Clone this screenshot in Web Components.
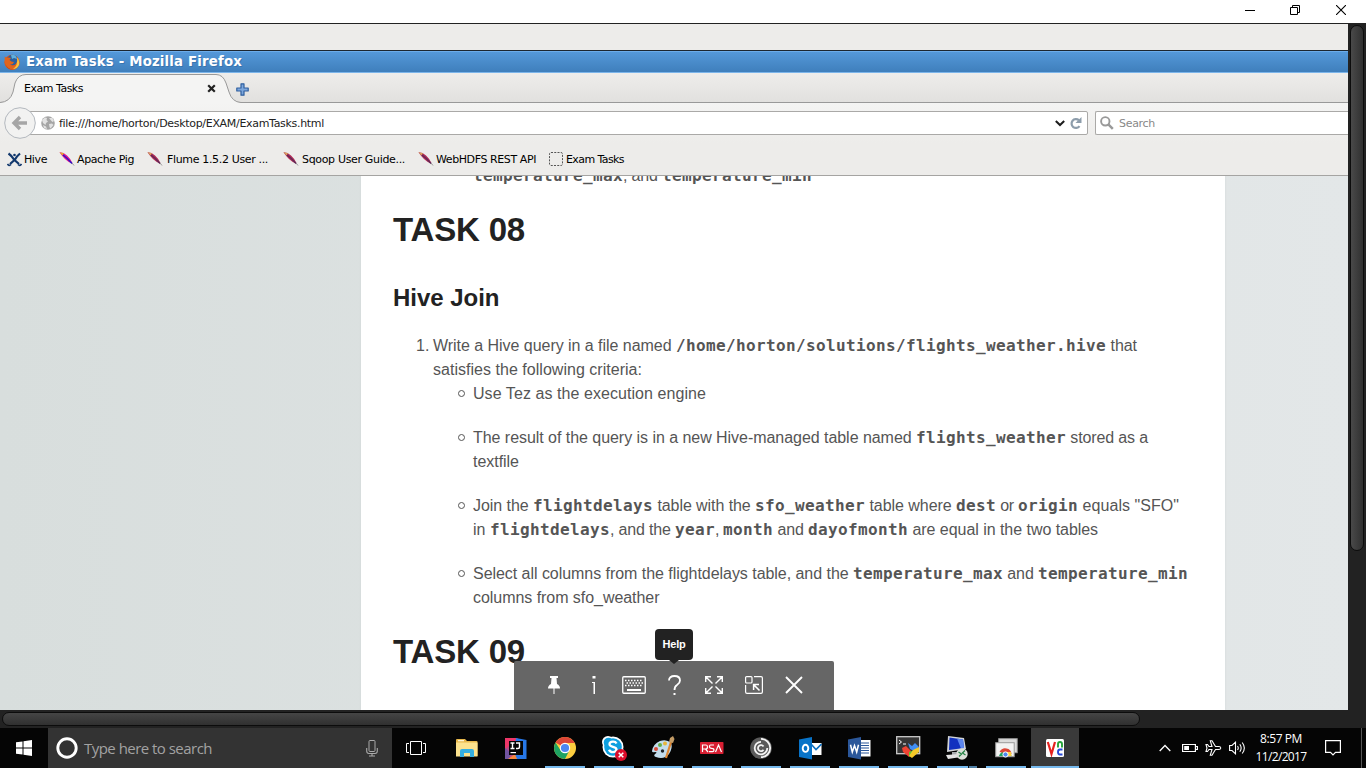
<!DOCTYPE html>
<html lang="en">
<head>
<meta charset="utf-8">
<title>Exam Tasks</title>
<style>html,body{margin:0;width:1366px;height:768px;overflow:hidden;background:#000}</style>
</head>
<body>
<remote-desktop></remote-desktop>
<script>
const define = (name, html) => customElements.define(name, class extends HTMLElement {
  constructor() {
    super();
    this.attachShadow({ mode: 'open' }).innerHTML = html;
  }
});

const feather = (quill, edge, tip) => `<svg width="16" height="16" viewBox="0 0 16 16"><path d="M.5 1.200Q4.500 1 8 4.500Q12 8 14 13Q9.500 11.500 6 8Q3 5 .5 1.200Z" fill="${edge}"/><path d="M.5 1.200L3.500 4.500 5 2.200Z" fill="${tip}"/><path d="M4 4Q9 7.500 13 12.500" fill="none" stroke="${quill}" stroke-width="1.300"/><path d="M13 12L15 14.500" stroke="#999" stroke-width="1"/></svg>`;
const ICONS = {
  min: `<svg width="10" height="10"><path d="M0 5.500H10" stroke="#000"/></svg>`,
  restore: `<svg width="10" height="10" fill="none" stroke="#000"><path d="M.5 2.500H7.500V9.500H.5ZM2.500 2.500V.5H9.500V7.500H7.500"/></svg>`,
  close: `<svg width="10" height="10"><path d="M0 0L10 10M10 0L0 10" stroke="#000" stroke-width="1.100"/></svg>`,
  firefox: `<svg width="16" height="16" viewBox="0 0 16 16"><circle cx="8" cy="8.300" r="7.500" fill="#d9501c"/><circle cx="8.600" cy="6" r="5.300" fill="#2b5f9e"/><path d="M7 1Q12 0 13 5L10 4 8 5Z" fill="#5fb0dc"/><path d="M.8 2.500L3 4Q5 3 7 4L5.500 6Q7 8 10 8Q9 11 6 10.500Q9 13 12 10Q14 7 13 3Q16 6 15.400 10Q13 16 8 15.800Q1 15 .5 8Z" fill="#e0651d"/><path d="M13.200 3.500Q16 7 15 11Q13 15 9 15Q14 12 13.200 3.500Z" fill="#f8c340"/><path d="M1 9Q3 15 9 15.500Q3 16 1 9" fill="#922716"/></svg>`,
  tabx: `<svg width="9" height="9"><path d="M1.200 1.200L7.800 7.800M7.800 1.200L1.200 7.800" stroke="#222" stroke-width="2.200"/></svg>`,
  plus: `<svg width="13" height="13"><path d="M5 .8H8V5H12.200V8H8V12.200H5V8H.8V5H5Z" fill="#7da7dc" stroke="#2f5f9f" stroke-width="1.200" stroke-linejoin="round"/></svg>`,
  back: `<svg width="32" height="32"><circle cx="16" cy="16" r="15.300" fill="#f2f2f1" stroke="#b3b8be"/><path d="M16 10L10 16L16 22M10 16H23" fill="none" stroke="#a6a6a6" stroke-width="3.400"/></svg>`,
  globe: `<svg width="14" height="14" viewBox="0 0 14 14"><circle cx="7" cy="7" r="6.800" fill="#a5a5a5"/><path d="M1 4L4 1.500 6 2 5.500 4 7 5.500 5 7 4.500 9 2 7ZM8 2L11.500 2 13 5 11.500 6 10 4.500ZM8 8L11 7.500 12.500 9 9.500 12.500 8.500 11ZM2 9L5 10.500 6 13 3 12Z" fill="#e2e2e2"/></svg>`,
  chev: `<svg width="10" height="7"><path d="M.8 1L5 5L9.200 1" fill="none" stroke="#1c1c1c" stroke-width="2"/></svg>`,
  reload: `<svg width="12" height="13"><path d="M9.500 9.200A4.400 4.400 0 1 1 8.800 3.200" fill="none" stroke="#8d9dab" stroke-width="2.200"/><path d="M11.500 0V6H5.500Z" fill="#8d9dab"/></svg>`,
  glass: `<svg width="14" height="14"><circle cx="5.300" cy="5.300" r="4.200" fill="none" stroke="#999" stroke-width="1.900"/><path d="M8.300 8.300L12.800 12.800" stroke="#999" stroke-width="2.500"/></svg>`,
  hive: `<svg width="15" height="15" viewBox="0 0 15 15" fill="none" stroke="#12386d"><path d="M1.500 1.500Q5 4 7 7.500L12 12M13 1.500Q10 4 8 7.500L3 12" stroke-width="2.200"/><circle cx="7.500" cy="3" r="1.300" fill="#12386d" stroke="none"/><path d="M.5 12Q2 14.500 4 12.500M11 12.500Q13 14.500 14.500 12" stroke-width="1.700"/></svg>`,
  pig: feather('#2416c8', '#e0128f', '#e8a92c'),
  feather: feather('#5d2a58', '#b02a55', '#d9a25c'),
  dashed: `<svg width="14" height="14"><rect x=".5" y=".5" width="13" height="13" rx="1.500" fill="none" stroke="#555" stroke-dasharray="2 1.250"/></svg>`,
  pin: `<svg width="12" height="18" fill="#fff"><path d="M2 0H10V2H8.500L9 8Q12 9.500 12 12.500H0Q0 9.500 3 8L3.500 2H2Z"/><path d="M5.500 12H6.500V18H5.500Z"/></svg>`,
  info: `<svg width="6" height="18" fill="#fff"><rect x="1.500" width="3" height="2.500"/><path d="M1 6H4V18H2.500V7H1Z"/></svg>`,
  kbd: `<svg width="24" height="18" fill="none" stroke="#fff"><rect x=".75" y=".75" width="22.500" height="16.500" rx="1" stroke-width="1.300"/><path d="M3 4.500H21M4.500 7H21M3 9.500H21" stroke-width="1.400" stroke-dasharray="1.500 1.500"/><path d="M5 14H19" stroke-width="2"/></svg>`,
  help: `<svg width="13" height="20" fill="none" stroke="#fff"><path d="M1 5.500Q1 1 6.500 1Q12 1 12 5.500Q12 8 9 10Q6.500 11.500 6.500 15" stroke-width="1.800"/><path d="M5.500 19H7.500" stroke-width="2"/></svg>`,
  expand: `<svg width="18" height="18" fill="none" stroke="#fff" stroke-width="1.400"><path d="M.7 6V.7H6M.7 .7L7.500 7.500M12 .7H17.300V6M17.300 .7L10.500 7.500M.7 12V17.300H6M.7 17.300L7.500 10.500M12 17.300H17.300V12M17.300 17.300L10.500 10.500"/></svg>`,
  scale: `<svg width="18" height="18" fill="none" stroke="#fff" stroke-width="1.200"><rect x=".6" y=".6" width="6.400" height="6.400" rx="1"/><path d="M9 .6H16Q17.400 .6 17.400 2V16Q17.400 17.400 16 17.400H2Q.6 17.400 .6 16V9"/><path d="M8.600 14V8.600H14M8.600 8.600L14.500 14.500" stroke-width="1.500"/></svg>`,
  bigx: `<svg width="18" height="18"><path d="M1 1L17 17M17 1L1 17" stroke="#fff" stroke-width="1.900"/></svg>`,
  win: `<svg width="16" height="16" fill="#fff"><path d="M0 2.300L6.500 1.400V7.500H0ZM7.500 1.200L16 0V7.500H7.500ZM0 8.500H6.500V14.600L0 13.700ZM7.500 8.500H16V16L7.500 14.800Z"/></svg>`,
  cortana: `<svg width="22" height="22"><circle cx="11" cy="11" r="9.200" fill="none" stroke="#fff" stroke-width="2.900"/></svg>`,
  mic: `<svg width="12" height="17" fill="none" stroke="#aaa"><rect x="3" y=".5" width="6" height="11" rx="1"/><path d="M.7 8V11Q.7 13.500 3 13.500H9Q11.300 13.500 11.300 11V8M6 13.500V16M3 16H9" stroke-width="1.100"/></svg>`,
  view: `<svg width="20" height="14" fill="none" stroke="#fff"><path d="M4.500 .5H15.500V13.500H4.500ZM3 2.500H.5V11.500H3M17 2.500H19.500V11.500H17"/></svg>`,
  folder: `<svg width="22" height="20"><path d="M0 2Q0 1 1 1H9L11 3H20.500Q21.500 3 21.500 4V18H0Z" fill="#e8b84c"/><rect x="2" y="2" width="6" height="1.300" fill="#fff5d0"/><path d="M0 4.500H21.500V18.500H0Z" fill="#fce28e"/><path d="M4 19V13Q4 11 6 11H16Q18 11 18 13V19H14V15H8V19Z" fill="#35aee0"/></svg>`,
  ij: `<svg width="22" height="22" viewBox="0 0 22 22"><path d="M0 1H12L10 22H0Z" fill="#b74a86"/><path d="M0 1H13L4 9 0 12Z" fill="#ee3668"/><path d="M11 1L21.500 3V22H9Z" fill="#2778e8"/><path d="M0 11L5 15V22H0Z" fill="#7254a0"/><path d="M3 22L10 17 12 22Z" fill="#f8873c"/><rect x="4" y="4" width="14" height="14" fill="#050505"/><path d="M5.500 6H9.500M7.500 6V11.500M5.500 11.500H9.500M11 6H14.500V10Q14.500 11.500 13 11.500H11" fill="none" stroke="#fff" stroke-width="1.400"/><rect x="5.500" y="15" width="5.500" height="1.200" fill="#fff"/></svg>`,
  chrome: `<svg width="22" height="22" viewBox="0 0 22 22"><circle cx="11" cy="11" r="11" fill="#fdce3f"/><path d="M11 11L1.500 5.500A11 11 0 0 1 20.500 5.500L20.600 6H11Z" fill="#dc4637"/><path d="M1.500 5.500A11 11 0 0 0 11 22L15.300 13.500 11 16 6.700 13.500Z" fill="#1ea362"/><circle cx="11" cy="11" r="5.200" fill="#fff"/><circle cx="11" cy="11" r="4.100" fill="#4d87f0"/></svg>`,
  skype: `<svg width="26" height="26" viewBox="0 0 26 26"><circle cx="7" cy="7" r="6" fill="#fff"/><circle cx="17" cy="17" r="6" fill="#fff"/><circle cx="12" cy="12" r="10.500" fill="#fff"/><circle cx="7.500" cy="7.500" r="4.800" fill="#0d9fdf"/><circle cx="12" cy="12" r="8.800" fill="#0d9fdf"/><path d="M15.500 8.500Q14.500 6.500 11.800 6.700Q8.300 7 8.500 9.300Q8.600 11 12 11.800Q15.700 12.600 15.500 14.800Q15 17 12 17.200Q9 17.200 8 14.800" fill="none" stroke="#fff" stroke-width="2.300"/><circle cx="20" cy="20" r="6" fill="#dc0d2b"/><path d="M17.700 17.700L22.300 22.300M22.300 17.700L17.700 22.300" stroke="#fff" stroke-width="1.500"/></svg>`,
  paint: `<svg width="24" height="24" viewBox="0 0 24 24"><path d="M1 15Q2 8 9 5Q16 3 20 7Q22 12 18 18Q13 24 5 21Q2 20 4 18Q7 16 4 16Q1 17 1 15Z" fill="#c3dded"/><circle cx="5" cy="13" r="2" fill="#d84b37"/><circle cx="9" cy="9" r="2" fill="#62ae48"/><circle cx="14" cy="7.500" r="2" fill="#e8b63a"/><circle cx="11.500" cy="15" r="1.700" fill="#20262c"/><path d="M20 6L15 22" stroke="#de8733" stroke-width="2.200"/><path d="M18 6L19 2 22 0 23.500 3 22 7Z" fill="#c39c66"/></svg>`,
  rsa: `<svg width="24" height="14"><rect y="1" width="23.500" height="12" rx=".8" fill="#d81f32"/><path d="M2.500 11V4H6Q7.500 4 7.500 6Q7.500 8 5.500 8H3M5.500 8L8 11M14 4H10.500Q9.500 4 9.500 5.500Q9.500 7.300 11.500 7.300Q14 7.300 14 9Q14 10.600 12.500 10.600H9M15.500 11L18.500 4L21.500 11" fill="none" stroke="#fff" stroke-width="1.200"/></svg>`,
  citrix: `<svg width="22" height="22"><circle cx="11" cy="11" r="10.800" fill="#5a5a5a"/><g fill="none" stroke="#f3f3f3" stroke-width="1.800"><path d="M13.500 9.500A3 3 0 1 0 13.500 12.800M11 4.800A6.300 6.300 0 1 0 17.300 11M11 1.800A9.200 9.200 0 0 1 20.200 11A9.200 9.200 0 0 1 11 20.200"/></g></svg>`,
  outlook: `<svg width="23" height="23"><rect x="12" y="6" width="10.500" height="12" fill="#fff"/><path d="M12 7L17 12.500 22.500 7" fill="none" stroke="#0a6fc2" stroke-width="1.600"/><path d="M0 2.500L13 0V22.500L0 20Z" fill="#0873c8"/><ellipse cx="6.500" cy="11.300" rx="2.800" ry="3.600" fill="none" stroke="#fff" stroke-width="1.900"/></svg>`,
  word: `<svg width="23" height="23"><rect x="12" y="3" width="10.500" height="16.500" fill="#fff"/><path d="M13 6H21M13 8.500H21M13 11H21M13 13.500H21M13 16H21" stroke="#2b579a" stroke-width="1.100"/><path d="M0 2.500L13 0V22.500L0 20Z" fill="#2b579a"/><path d="M2.500 7.800L4.300 15L6.500 8.500L8.700 15L10.500 7.800" fill="none" stroke="#fff" stroke-width="1.500"/></svg>`,
  moba: `<svg width="25" height="24"><rect x=".7" y=".7" width="23" height="17" fill="#353535" stroke="#ccc" stroke-width="1.300"/><path d="M3 4L5.500 6 3 8M7 8H10" fill="none" stroke="#fff"/><path d="M12 7L16 10 19 7 23 11 18 15 14 13Z" fill="#408ef4"/><path d="M6 12L10 10 15 15 13 21 7 16Z" fill="#ef4434"/><path d="M13 16L18 14 18 17 13 21Z" fill="#60c432"/><path d="M17 14L23 11 23 16 16 22 13 20Z" fill="#f4c928"/></svg>`,
  rdp: `<svg width="24" height="24"><path d="M3 0L19 2 21 13 2 16Z" fill="#d2d5d8"/><path d="M4.500 1.500L18 3.500 19 12 4 14Z" fill="#1231bf"/><path d="M12 2.500L18 3.500 19 12 16 12.500Z" fill="#5c86ee"/><path d="M7 16H13V19H7Z" fill="#a6a9ac"/><path d="M1 19L14 18 16 21 3 23Z" fill="#e5e5e5"/><circle cx="17" cy="18" r="5.700" fill="#dce0da"/><path d="M13.500 16L16.500 18 14 20.500M20 14.500L17.500 17 20.500 19" fill="none" stroke="#258245" stroke-width="1.300"/></svg>`,
  crd: `<svg width="23" height="20"><rect x="3.700" y=".7" width="18.500" height="14" fill="#dcdcdc" stroke="#999"/><rect x=".7" y="4.700" width="18.500" height="14" fill="#f2f2f2" stroke="#999"/><path d="M4 18A6.500 6.500 0 0 1 16.500 18Z" fill="#1ea362"/><path d="M4.500 14Q7 9.500 11.500 10.500Q16 11 16.500 16L10 15Z" fill="#dc4637"/><path d="M11 14H16L16.500 18H11Z" fill="#fdce3f"/><circle cx="10.500" cy="16.500" r="2.600" fill="#4d87f0" stroke="#fff"/></svg>`,
  vnc: `<svg width="18" height="18"><rect width="18" height="18" rx="1.500" fill="#fff"/><path d="M1.800 3L5.500 15L9 3" fill="none" stroke="#e52320" stroke-width="2.200"/><path d="M12 8.500V5Q12 3 14 3Q16 3 16 5V8.500" fill="none" stroke="#26a43b" stroke-width="1.900"/><path d="M16.500 10.500H14Q12 10.500 12 13Q12 15.500 14 15.500H16.500" fill="none" stroke="#2748d8" stroke-width="1.900"/></svg>`,
  up: `<svg width="12" height="8"><path d="M.7 7L6 1.500L11.300 7" fill="none" stroke="#fff" stroke-width="1.300"/></svg>`,
  bat: `<svg width="16" height="10"><path d="M.6 1.500H13.400V8.500H.6ZM14 3.500H15.400V6.500H14" fill="none" stroke="#fff" stroke-width="1.200"/><rect x="2.200" y="3" width="4.800" height="4" fill="#fff"/></svg>`,
  plane: `<svg width="17" height="16"><path d="M15.800 8Q15.500 6.500 14 6.500H10.500L7 .8H5.300L7 6.500H4L2.500 4.500H1L2 8L1 11.500H2.500L4 9.500H7L5.300 15.200H7L10.500 9.500H14Q15.500 9.500 15.800 8Z" fill="none" stroke="#fff" stroke-width="1.100"/></svg>`,
  sound: `<svg width="17" height="14" fill="none" stroke="#fff"><path d="M.6 4.500H3L6.500 1.200V12.800L3 9.500H.6ZM8.500 5Q10 7 8.500 9M10.800 3.200Q13.500 7 10.800 10.800M13.200 1.500Q17.500 7 13.200 12.500" stroke-width="1.100"/></svg>`,
  note: `<svg width="16" height="16"><path d="M.6 .6H15.400V12.400H10.500L8 15L5.500 12.400H.6Z" fill="none" stroke="#fff" stroke-width="1.200"/></svg>`
};

customElements.define('ui-icon', class extends HTMLElement {
  constructor() { super(); this.attachShadow({ mode: 'open' }); }
  connectedCallback() {
    this.shadowRoot.innerHTML = `<style>:host{display:inline-flex;flex:none}svg{display:block}</style>` + ICONS[this.getAttribute('name')];
  }
});

define('window-bar', `<style>:host{display:flex;height:23px;box-sizing:border-box;background:#fff;justify-content:flex-end;align-items:center;padding:0 20px 3px 0}ui-icon+ui-icon{margin-left:35px}ui-icon:last-child{margin-left:36px}</style>
<ui-icon name="min"></ui-icon><ui-icon name="restore"></ui-icon><ui-icon name="close"></ui-icon>`);

define('firefox-title', `<style>:host{display:flex;align-items:center;height:22px;box-sizing:border-box;padding-left:4px;gap:6px;background:linear-gradient(#5498d9,#3f7fbc);border-top:1px solid #6bacea;border-bottom:1px solid #7cb5ea;color:#fff;font:bold 13.300px/20px "DejaVu Sans",sans-serif;text-shadow:1px 1px 0 #2d649a88}</style>
<ui-icon name="firefox"></ui-icon><text-run w="216">Exam Tasks - Mozilla Firefox</text-run>`);

define('tab-strip', `<style>:host{display:flex;height:30px;background:linear-gradient(#eeedeb,#e1e0de);box-shadow:inset 0 -1px #999;font:11px/16px "DejaVu Sans",sans-serif;color:#000}
.tab{display:grid;width:236px;height:30px;flex:none}.tab>*{grid-area:1/1}.label{display:flex;align-items:center;padding:1px 26px 0 24px;justify-content:space-between}svg{display:block}.new{padding-top:10px}</style>
<div class="tab"><svg width="242" height="30"><path d="M0 29.500Q10 29 13 19L15 10Q18 1.500 26 1.500H216Q223 1.500 226 10L229 19Q232 29 241 29.500V30H0Z" fill="#f4f4f3"/><path d="M0 29.500Q10 29 13 19L15 10Q18 1.500 26 1.500H216Q223 1.500 226 10L229 19Q232 29 241 29.500" fill="none" stroke="#999"/></svg>
<div class="label"><text-run w="59">Exam Tasks</text-run><ui-icon name="tabx"></ui-icon></div></div><div class="new"><ui-icon name="plus"></ui-icon></div>`);

define('nav-bar', `<style>:host{display:flex;align-items:center;height:40px;background:linear-gradient(#f4f4f3,#edecea);font:11px/16px "DejaVu Sans",sans-serif;color:#222}
.back{margin:0 -16px 0 4px;position:relative;z-index:1}.field{display:flex;align-items:center;height:24px;box-sizing:border-box;border:1px solid #aaa9a7;background:#fff;border-radius:2px}text-run{padding-top:2px}
.url{width:1068px;padding:0 5px 0 20px}.url text-run{margin-left:4px;margin-right:auto}.url ui-icon:last-child{margin-left:5px}.search{margin-left:7px;flex:1;border-right:0;border-radius:2px 0 0 2px;padding-left:4px;gap:5px;color:#888}</style>
<ui-icon class="back" name="back"></ui-icon><div class="field url"><ui-icon name="globe"></ui-icon><text-run w="265">file:///home/horton/Desktop/EXAM/ExamTasks.html</text-run><ui-icon name="chev"></ui-icon><ui-icon name="reload"></ui-icon></div>
<div class="field search"><ui-icon name="glass"></ui-icon><text-run w="36">Search</text-run></div>`);

define('bookmark-item', `<style>:host{display:flex;align-items:center;gap:var(--gap,3px)}</style><slot></slot>`);
define('bookmarks-bar', `<style>:host{display:flex;align-items:center;height:33px;box-sizing:border-box;padding:0 0 0 7px;background:#edecea;border-bottom:1px solid #a5a4a2;font:11px/16px "DejaVu Sans",sans-serif;color:#000}text-run{padding-top:1px}</style>
<bookmark-item style="--gap:2px"><ui-icon name="hive"></ui-icon><text-run w="23">Hive</text-run></bookmark-item>
<bookmark-item style="margin-left:12px;--gap:2px"><ui-icon name="pig"></ui-icon><text-run w="57">Apache Pig</text-run></bookmark-item>
<bookmark-item style="margin-left:13px;--gap:4px"><ui-icon name="feather"></ui-icon><text-run w="101">Flume 1.5.2 User ...</text-run></bookmark-item>
<bookmark-item style="margin-left:15px"><ui-icon name="feather"></ui-icon><text-run w="103">Sqoop User Guide...</text-run></bookmark-item>
<bookmark-item style="margin-left:13px;--gap:2px"><ui-icon name="feather"></ui-icon><text-run w="100">WebHDFS REST API</text-run></bookmark-item>
<bookmark-item style="margin-left:13px"><ui-icon name="dashed"></ui-icon><text-run w="58">Exam Tasks</text-run></bookmark-item>`);

define('exam-page', `<style>:host{display:block;height:534px;overflow:hidden;background:linear-gradient(90deg,#d8dedd,#e3e7e8)}
.sheet{margin-left:361px;width:864px;height:534px;box-sizing:border-box;padding-left:32px;background:#fff;box-shadow:0 0 2px #d0d5d5;overflow:hidden;font:16px/24px "Liberation Sans",sans-serif;color:#555}
.line{height:24px;display:flex;white-space:pre;align-items:baseline}h1,h2{margin:0;color:#222}h1{font-size:33px;line-height:40px}h2{font-size:24px;line-height:24px;margin-top:36px}
.first{margin:-12px 0 22px 80px}.num{width:40px;padding-left:23px;box-sizing:border-box}.item{display:flex;margin:0 0 20px 64px}.item:before{content:"";box-sizing:border-box;width:7px;height:7px;border:1px solid #555;border-radius:50%;margin:8px 8px 0 1px;flex:none}
.l2{padding-left:40px}.list{margin-top:24px}.list+h1{margin-top:22px}.item:last-child{margin-bottom:0}b{font:bold 16px/24px "DejaVu Sans Mono",monospace;letter-spacing:.368px}</style>
<div class="sheet">
<div class="line first"><b>temperature_max</b><text-run w="39">, and </text-run><b>temperature_min</b></div>
<h1><text-run w="132">TASK 08</text-run></h1>
<h2><text-run w="106.500">Hive Join</text-run></h2>
<div class="list">
<div class="line"><span class="num">1.</span><text-run w="243">Write a Hive query in a file named </text-run><b>/home/horton/solutions/flights_weather.hive</b><text-run w="31"> that</text-run></div>
<div class="line l2"><text-run w="209">satisfies the following criteria:</text-run></div>
<div class="item"><div><div class="line"><text-run w="233">Use Tez as the execution engine</text-run></div></div></div>
<div class="item"><div><div class="line"><text-run w="443">The result of the query is in a new Hive-managed table named </text-run><b>flights_weather</b><text-run w="82"> stored as a</text-run></div><div class="line"><text-run w="46">textfile</text-run></div></div></div>
<div class="item"><div><div class="line"><text-run w="60">Join the </text-run><b>flightdelays</b><text-run w="102"> table with the </text-run><b>sfo_weather</b><text-run w="91"> table where </text-run><b>dest</b><text-run w="22"> or </text-run><b>origin</b><text-run w="101"> equals "SFO"</text-run></div><div class="line"><text-run w="17">in </text-run><b>flightdelays</b><text-run w="65">, and the </text-run><b>year</b><text-run w="8">, </text-run><b>month</b><text-run w="35"> and </text-run><b>dayofmonth</b><text-run w="190"> are equal in the two tables</text-run></div></div></div>
<div class="item"><div><div class="line"><text-run w="380">Select all columns from the flightdelays table, and the </text-run><b>temperature_max</b><text-run w="35"> and </text-run><b>temperature_min</b></div><div class="line"><text-run w="186.500">columns from sfo_weather</text-run></div></div></div>
</div>
<h1><text-run w="132">TASK 09</text-run></h1>
</div>`);

define('scroll-bars', `<style>:host{display:block;background:#222;box-sizing:border-box}.thumb{box-sizing:border-box;border:1px solid #0c0c0c;border-radius:7px}
:host([vertical]){width:18px;height:686px;padding:1px 0 0 2px}:host([vertical]) .thumb{width:14px;height:526px;background:linear-gradient(90deg,#494949,#303030)}
:host(:not([vertical])){height:18px;padding:2px 0 0 2px}:host(:not([vertical])) .thumb{width:1138px;height:14px;background:linear-gradient(#454545,#303030)}</style><div class="thumb"></div>`);

define('session-toolbar', `<style>:host{display:flex;position:absolute;left:514px;top:661px;width:320px;height:49px;box-sizing:border-box;padding:0 20px 1px;background:#666;border-radius:2px 2px 0 0}
div{width:40px;display:flex;align-items:center;justify-content:center;position:relative}.tip{position:absolute;width:38px;height:31px;left:1px;top:-32px;background:#222;border-radius:4px;color:#fff;font:bold 11px/31px "Liberation Sans",sans-serif;text-align:center}.tip:after{content:"";position:absolute;left:14px;top:31px;border:5px solid transparent;border-top:4px solid #222;border-bottom:0}</style>
<div><ui-icon name="pin"></ui-icon></div><div><ui-icon name="info"></ui-icon></div><div><ui-icon name="kbd"></ui-icon></div><div><ui-icon name="help"></ui-icon><span class="tip"><text-run w="23">Help</text-run></span></div><div><ui-icon name="expand"></ui-icon></div><div><ui-icon name="scale"></ui-icon></div><div><ui-icon name="bigx"></ui-icon></div>`);

define('task-button', `<style>:host{display:flex;width:48px;height:40px;align-items:center;justify-content:center;box-sizing:border-box;margin-right:1px;flex:none;background:linear-gradient(#76b9ed,#76b9ed) center bottom/var(--u,40px) 2px no-repeat}
:host([idle]){background:none}:host([active]){--u:48px;background-color:#3a3a3a}:host([stack]){background:linear-gradient(90deg,#76b9ed 31px,#111 31px 32px,#4f7fa5 32px) center bottom/40px 2px no-repeat}</style><slot></slot>`);

define('task-bar', `<style>:host{display:flex;align-items:center;height:40px;background:#050505;color:#fff;font:12px/18px "Open Sans","Noto Sans",sans-serif}
.start{width:48px;display:flex;justify-content:center}.search{width:344px;height:40px;box-sizing:border-box;background:#333;display:flex;align-items:center;padding:0 14px 0 8px;gap:6px;color:#a2a2a2;font-size:15px}.search ui-icon:last-child{margin-left:auto}
.tray{display:flex;align-items:center;margin-left:auto;height:40px}.clock{width:58px;display:flex;flex-direction:column;align-items:center;margin:0 15px 0 6px}.edge{height:40px;width:4px;border-left:1px solid #555;margin-left:20px}</style>
<div class="start"><ui-icon name="win"></ui-icon></div><div class="search"><ui-icon name="cortana"></ui-icon><text-run w="128">Type here to search</text-run><ui-icon name="mic"></ui-icon></div>
<task-button idle><ui-icon name="view"></ui-icon></task-button><task-button idle style="margin-left:2px"><ui-icon name="folder"></ui-icon></task-button><task-button idle><ui-icon name="ij"></ui-icon></task-button>
${['chrome','skype','paint','rsa','citrix','outlook','word','moba'].map(n => `<task-button><ui-icon name="${n}"></ui-icon></task-button>`).join('')}<task-button stack><ui-icon name="rdp"></ui-icon></task-button><task-button><ui-icon name="crd"></ui-icon></task-button><task-button active><ui-icon name="vnc"></ui-icon></task-button>
<div class="tray"><ui-icon name="up"></ui-icon><ui-icon name="bat" style="margin-left:11px"></ui-icon><ui-icon name="plane" style="margin-left:7px"></ui-icon><ui-icon name="sound" style="margin-left:7px"></ui-icon>
<div class="clock"><text-run w="42">8:57 PM</text-run><text-run w="51">11/2/2017</text-run></div><ui-icon name="note"></ui-icon><div class="edge"></div></div>`);

define('remote-desktop', `<style>:host{display:block;width:1366px;height:768px;position:relative;overflow:hidden}.view{display:grid;grid-template-columns:1348px 18px;border-top:1px solid #222;height:686px}.blank{height:26px;background:#edecea;border-bottom:1px solid #1c2630}</style>
<window-bar></window-bar><div class="view"><div><div class="blank"></div><firefox-title></firefox-title><tab-strip></tab-strip><nav-bar></nav-bar><bookmarks-bar></bookmarks-bar><exam-page></exam-page></div><scroll-bars vertical></scroll-bars></div>
<scroll-bars></scroll-bars><task-bar></task-bar><session-toolbar></session-toolbar>`);

// Spreads its text evenly over the advance width given in the w attribute.
customElements.define('text-run', class extends HTMLElement {
  constructor() {
    super();
    this.attachShadow({ mode: 'open' }).innerHTML = '<style>:host{display:inline-block;white-space:pre;flex:none}</style><slot></slot>';
  }
  connectedCallback() {
    const natural = this.getBoundingClientRect().width;
    const spacing = (this.getAttribute('w') - natural) / this.textContent.length;
    this.style.letterSpacing = spacing.toFixed(4) + 'px';
  }
});
</script>
</body>
</html>
